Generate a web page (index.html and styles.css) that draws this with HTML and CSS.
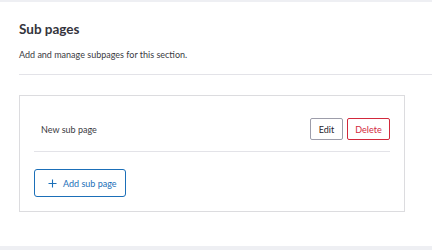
FILE: index.html
```html
<!DOCTYPE html>
<html>
<head>
<meta charset="utf-8">
<link rel="stylesheet" href="styles.css">
</head>
<body>
<div class="panel">
  <div class="header">
    <h2 class="title">Sub pages</h2>
    <p class="desc">Add and manage subpages for this section.</p>
  </div>
  <div class="content">
    <div class="card">
      <div class="row">
        <span class="row-name">New sub page</span>
        <div class="actions">
          <button class="btn btn-edit">Edit</button>
          <button class="btn btn-delete">Delete</button>
        </div>
      </div>
      <button class="btn-add">
        <svg class="plus" width="9" height="9" viewBox="0 0 9 9"><path d="M4.5 0.5V8.5M0.5 4.5H8.5" stroke="#1b6fb8" stroke-width="1.1" fill="none"/></svg>
        <span>Add sub page</span>
      </button>
    </div>
  </div>
</div>
</body>
</html>
```
FILE: styles.css
```css
html, body {
  margin: 0;
  padding: 0;
}
body {
  background: #eeeff3;
  font-family: Lato, "Open Sans", sans-serif;
  color: #2d2d35;
  height: 250px;
  overflow: hidden;
}
.panel {
  margin-top: 2px;
  background: #fff;
  height: 244px;
  padding-left: 19px;
  box-sizing: border-box;
}
.header {
  padding-top: 17px;
  border-bottom: 1px solid #e3e3e8;
  padding-bottom: 13px;
}
.title {
  margin: 0;
  font-size: 13.5px;
  font-weight: 700;
  line-height: 20px;
  color: #34343c;
}
.desc {
  margin: 10px 0 0;
  font-size: 9px;
  line-height: 12px;
  color: #3a3a42;
}
.content {
  padding-top: 20px;
  width: 386px;
}
.card {
  border: 1px solid #dcdcdf;
  padding: 14px 14px 14px;
}
.row {
  display: flex;
  align-items: center;
  justify-content: space-between;
  padding: 8px 0 11px 7px;
  border-bottom: 1px solid #e3e3e8;
}
.row-name {
  font-size: 9px;
  color: #3a3a42;
}
.actions {
  display: flex;
  gap: 4px;
}
.btn {
  font-family: Lato, "Open Sans", sans-serif;
  font-size: 9px;
  height: 22px;
  padding: 0;
  background: #fff;
  border-radius: 2px;
  cursor: pointer;
}
.btn-edit {
  border: 1px solid #9d9daa;
  color: #25252d;
  width: 33px;
}
.btn-delete {
  border: 1px solid #d2293c;
  color: #d2293c;
  width: 43px;
}
.btn-add {
  margin-top: 17px;
  display: flex;
  align-items: center;
  gap: 6px;
  height: 28px;
  width: 92px;
  padding: 0 0 0 13px;
  background: #fff;
  border: 1px solid #1b6fb8;
  border-radius: 3px;
  color: #1b6fb8;
  font-family: Lato, "Open Sans", sans-serif;
  font-size: 9px;
  cursor: pointer;
}
.plus {
  display: block;
}
```
